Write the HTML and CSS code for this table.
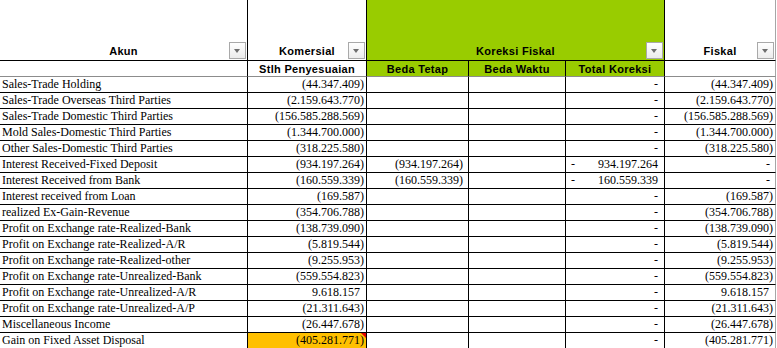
FILE: index.html
```html
<!DOCTYPE html>
<html>
<head>
<meta charset="utf-8">
<link rel="stylesheet" href="styles.css">
</head>
<body>
<div class="sheet">
  <div class="h1 c0">Akun<span class="filter"></span></div>
  <div class="h1 c1">Komersial<span class="filter"></span></div>
  <div class="h1 kf">Koreksi Fiskal<span class="filter"></span></div>
  <div class="h1 c5">Fiskal<span class="filter"></span></div>

  <div class="h2 c0"></div>
  <div class="h2 c1">Stlh Penyesuaian</div>
  <div class="h2 g">Beda Tetap</div>
  <div class="h2 g">Beda Waktu</div>
  <div class="h2 g">Total Koreksi</div>
  <div class="h2 c5"></div>

  <div class="d t">Sales-Trade Holding</div><div class="d n">(44.347.409)</div><div class="d"></div><div class="d"></div><div class="d n dash">-</div><div class="d n l">(44.347.409)</div>
  <div class="d t">Sales-Trade Overseas Third Parties</div><div class="d n">(2.159.643.770)</div><div class="d"></div><div class="d"></div><div class="d n dash">-</div><div class="d n l">(2.159.643.770)</div>
  <div class="d t">Sales-Trade Domestic Third Parties</div><div class="d n">(156.585.288.569)</div><div class="d"></div><div class="d"></div><div class="d n dash">-</div><div class="d n l">(156.585.288.569)</div>
  <div class="d t">Mold Sales-Domestic Third Parties</div><div class="d n">(1.344.700.000)</div><div class="d"></div><div class="d"></div><div class="d n dash">-</div><div class="d n l">(1.344.700.000)</div>
  <div class="d t">Other Sales-Domestic Third Parties</div><div class="d n">(318.225.580)</div><div class="d"></div><div class="d"></div><div class="d n dash">-</div><div class="d n l">(318.225.580)</div>
  <div class="d t">Interest Received-Fixed Deposit</div><div class="d n">(934.197.264)</div><div class="d n bt">(934.197.264)</div><div class="d"></div><div class="d split"><span>-</span><span>934.197.264</span></div><div class="d n l dash">-</div>
  <div class="d t">Interest Received from Bank</div><div class="d n">(160.559.339)</div><div class="d n bt">(160.559.339)</div><div class="d"></div><div class="d split"><span>-</span><span>160.559.339</span></div><div class="d n l dash">-</div>
  <div class="d t">Interest received from Loan</div><div class="d n">(169.587)</div><div class="d"></div><div class="d"></div><div class="d n dash">-</div><div class="d n l">(169.587)</div>
  <div class="d t">realized Ex-Gain-Revenue</div><div class="d n">(354.706.788)</div><div class="d"></div><div class="d"></div><div class="d n dash">-</div><div class="d n l">(354.706.788)</div>
  <div class="d t">Profit on Exchange rate-Realized-Bank</div><div class="d n">(138.739.090)</div><div class="d"></div><div class="d"></div><div class="d n dash">-</div><div class="d n l">(138.739.090)</div>
  <div class="d t">Profit on Exchange rate-Realized-A/R</div><div class="d n">(5.819.544)</div><div class="d"></div><div class="d"></div><div class="d n dash">-</div><div class="d n l">(5.819.544)</div>
  <div class="d t">Profit on Exchange rate-Realized-other</div><div class="d n">(9.255.953)</div><div class="d"></div><div class="d"></div><div class="d n dash">-</div><div class="d n l">(9.255.953)</div>
  <div class="d t">Profit on Exchange rate-Unrealized-Bank</div><div class="d n">(559.554.823)</div><div class="d"></div><div class="d"></div><div class="d n dash">-</div><div class="d n l">(559.554.823)</div>
  <div class="d t">Profit on Exchange rate-Unrealized-A/R</div><div class="d n pos">9.618.157</div><div class="d"></div><div class="d"></div><div class="d n dash">-</div><div class="d n l pos">9.618.157</div>
  <div class="d t">Profit on Exchange rate-Unrealized-A/P</div><div class="d n">(21.311.643)</div><div class="d"></div><div class="d"></div><div class="d n dash">-</div><div class="d n l">(21.311.643)</div>
  <div class="d t">Miscellaneous Income</div><div class="d n">(26.447.678)</div><div class="d"></div><div class="d"></div><div class="d n dash">-</div><div class="d n l">(26.447.678)</div>
  <div class="d t">Gain on Fixed Asset Disposal</div><div class="d n hl">(405.281.771)<span class="comment"></span></div><div class="d"></div><div class="d"></div><div class="d n dash">-</div><div class="d n l">(405.281.771)</div>
</div>
</body>
</html>
```
FILE: styles.css
```css
html, body {
  margin: 0;
  padding: 0;
  background: #ffffff;
}

.sheet {
  display: grid;
  grid-template-columns: 248px 119px 102px 97px 99px 111px;
  grid-template-rows: 61px 16px repeat(17, 16px);
  width: 776px;
}

.sheet > div {
  box-sizing: border-box;
  border-right: 1px solid #000;
  border-bottom: 1px solid #000;
  overflow: hidden;
  white-space: nowrap;
}

.h1 {
  position: relative;
  display: flex;
  align-items: flex-end;
  justify-content: center;
  font-family: "Liberation Sans", Arial, sans-serif;
  font-weight: bold;
  font-size: 11px;
  letter-spacing: 0.3px;
  line-height: 13px;
  padding-bottom: 2px;
  color: #000;
}

.kf {
  grid-column: span 3;
  background: #99cc00;
}

.sheet > .c5 {
  border-right-color: #a6a6a6;
}

.h2 {
  display: flex;
  align-items: center;
  justify-content: center;
  font-family: "Liberation Sans", Arial, sans-serif;
  font-weight: bold;
  font-size: 11px;
  letter-spacing: 0.3px;
  color: #000;
}

.sheet > .h2 {
  border-bottom-color: #8c8c8c;
}

.g {
  background: #99cc00;
}

.filter {
  position: absolute;
  right: 1px;
  bottom: 1px;
  width: 15px;
  height: 15px;
  border: 1px solid #a9a9a9;
  background: linear-gradient(#ffffff, #ececec);
}

.filter::after {
  content: "";
  position: absolute;
  left: 4px;
  top: 6px;
  border-left: 3.5px solid transparent;
  border-right: 3.5px solid transparent;
  border-top: 4px solid #6e6e6e;
}

.d {
  font-family: "Liberation Serif", "Times New Roman", serif;
  font-size: 12px;
  line-height: 15px;
  color: #000;
}

.t {
  padding-left: 2px;
}

.n {
  text-align: right;
  padding-right: 2px;
}

.bt {
  padding-right: 5px;
}

.dash {
  padding-right: 6px;
}

.sheet > .l {
  border-right-color: #a6a6a6;
  padding-right: 2px;
}

.sheet > .l.dash {
  padding-right: 5px;
}

.pos {
  padding-right: 6px;
}

.sheet > .l.pos {
  padding-right: 6px;
}

.split {
  display: flex;
  justify-content: space-between;
  padding: 0 6px 0 5px;
}

.hl {
  position: relative;
  background: #ffc000;
}

.comment {
  position: absolute;
  top: 0;
  right: 0;
  border-left: 5px solid transparent;
  border-top: 5px solid #e00000;
}
```
